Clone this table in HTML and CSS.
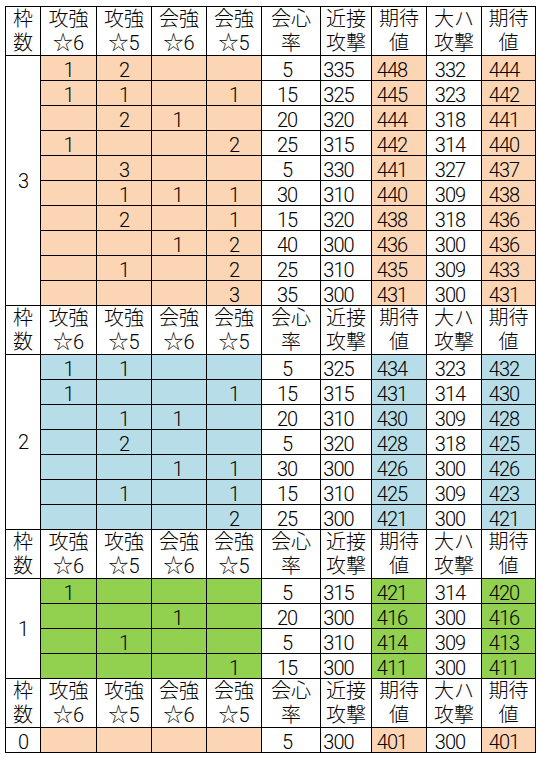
FILE: index.html
```html
<!DOCTYPE html>
<html lang="ja">
<head>
<meta charset="utf-8">
<title>枠数別 期待値表</title>
<link rel="stylesheet" href="styles.css">
</head>
<body>
<table class="sheet">
<colgroup>
<col class="w-waku"><col class="w-a"><col class="w-b"><col class="w-c"><col class="w-d"><col class="w-e"><col class="w-f"><col class="w-g"><col class="w-h"><col class="w-i">
</colgroup>
<tbody class="peach">
<tr class="hdr"><th>枠<br>数</th><th>攻強<br>☆6</th><th>攻強<br>☆5</th><th>会強<br>☆6</th><th>会強<br>☆5</th><th>会心<br>率</th><th>近接<br>攻撃</th><th>期待<br>値</th><th>大ハ<br>攻撃</th><th>期待<br>値</th></tr>
<tr><td class="waku" rowspan="10">3</td><td class="f">1</td><td class="f">2</td><td class="f"></td><td class="f"></td><td>5</td><td>335</td><td class="f">448</td><td>332</td><td class="f">444</td></tr>
<tr><td class="f">1</td><td class="f">1</td><td class="f"></td><td class="f">1</td><td>15</td><td>325</td><td class="f">445</td><td>323</td><td class="f">442</td></tr>
<tr><td class="f"></td><td class="f">2</td><td class="f">1</td><td class="f"></td><td>20</td><td>320</td><td class="f">444</td><td>318</td><td class="f">441</td></tr>
<tr><td class="f">1</td><td class="f"></td><td class="f"></td><td class="f">2</td><td>25</td><td>315</td><td class="f">442</td><td>314</td><td class="f">440</td></tr>
<tr><td class="f"></td><td class="f">3</td><td class="f"></td><td class="f"></td><td>5</td><td>330</td><td class="f">441</td><td>327</td><td class="f">437</td></tr>
<tr><td class="f"></td><td class="f">1</td><td class="f">1</td><td class="f">1</td><td>30</td><td>310</td><td class="f">440</td><td>309</td><td class="f">438</td></tr>
<tr><td class="f"></td><td class="f">2</td><td class="f"></td><td class="f">1</td><td>15</td><td>320</td><td class="f">438</td><td>318</td><td class="f">436</td></tr>
<tr><td class="f"></td><td class="f"></td><td class="f">1</td><td class="f">2</td><td>40</td><td>300</td><td class="f">436</td><td>300</td><td class="f">436</td></tr>
<tr><td class="f"></td><td class="f">1</td><td class="f"></td><td class="f">2</td><td>25</td><td>310</td><td class="f">435</td><td>309</td><td class="f">433</td></tr>
<tr><td class="f"></td><td class="f"></td><td class="f"></td><td class="f">3</td><td>35</td><td>300</td><td class="f">431</td><td>300</td><td class="f">431</td></tr>
</tbody>
<tbody class="blue">
<tr class="hdr"><th>枠<br>数</th><th>攻強<br>☆6</th><th>攻強<br>☆5</th><th>会強<br>☆6</th><th>会強<br>☆5</th><th>会心<br>率</th><th>近接<br>攻撃</th><th>期待<br>値</th><th>大ハ<br>攻撃</th><th>期待<br>値</th></tr>
<tr><td class="waku" rowspan="7">2</td><td class="f">1</td><td class="f">1</td><td class="f"></td><td class="f"></td><td>5</td><td>325</td><td class="f">434</td><td>323</td><td class="f">432</td></tr>
<tr><td class="f">1</td><td class="f"></td><td class="f"></td><td class="f">1</td><td>15</td><td>315</td><td class="f">431</td><td>314</td><td class="f">430</td></tr>
<tr><td class="f"></td><td class="f">1</td><td class="f">1</td><td class="f"></td><td>20</td><td>310</td><td class="f">430</td><td>309</td><td class="f">428</td></tr>
<tr><td class="f"></td><td class="f">2</td><td class="f"></td><td class="f"></td><td>5</td><td>320</td><td class="f">428</td><td>318</td><td class="f">425</td></tr>
<tr><td class="f"></td><td class="f"></td><td class="f">1</td><td class="f">1</td><td>30</td><td>300</td><td class="f">426</td><td>300</td><td class="f">426</td></tr>
<tr><td class="f"></td><td class="f">1</td><td class="f"></td><td class="f">1</td><td>15</td><td>310</td><td class="f">425</td><td>309</td><td class="f">423</td></tr>
<tr><td class="f"></td><td class="f"></td><td class="f"></td><td class="f">2</td><td>25</td><td>300</td><td class="f">421</td><td>300</td><td class="f">421</td></tr>
</tbody>
<tbody class="green">
<tr class="hdr"><th>枠<br>数</th><th>攻強<br>☆6</th><th>攻強<br>☆5</th><th>会強<br>☆6</th><th>会強<br>☆5</th><th>会心<br>率</th><th>近接<br>攻撃</th><th>期待<br>値</th><th>大ハ<br>攻撃</th><th>期待<br>値</th></tr>
<tr><td class="waku" rowspan="4">1</td><td class="f">1</td><td class="f"></td><td class="f"></td><td class="f"></td><td>5</td><td>315</td><td class="f">421</td><td>314</td><td class="f">420</td></tr>
<tr><td class="f"></td><td class="f"></td><td class="f">1</td><td class="f"></td><td>20</td><td>300</td><td class="f">416</td><td>300</td><td class="f">416</td></tr>
<tr><td class="f"></td><td class="f">1</td><td class="f"></td><td class="f"></td><td>5</td><td>310</td><td class="f">414</td><td>309</td><td class="f">413</td></tr>
<tr><td class="f"></td><td class="f"></td><td class="f"></td><td class="f">1</td><td>15</td><td>300</td><td class="f">411</td><td>300</td><td class="f">411</td></tr>
</tbody>
<tbody class="peach">
<tr class="hdr"><th>枠<br>数</th><th>攻強<br>☆6</th><th>攻強<br>☆5</th><th>会強<br>☆6</th><th>会強<br>☆5</th><th>会心<br>率</th><th>近接<br>攻撃</th><th>期待<br>値</th><th>大ハ<br>攻撃</th><th>期待<br>値</th></tr>
<tr><td class="waku zero">0</td><td class="f"></td><td class="f"></td><td class="f"></td><td class="f"></td><td>5</td><td>300</td><td class="f">401</td><td>300</td><td class="f">401</td></tr>
</tbody>
</table>
</body>
</html>
```
FILE: styles.css
```css
html, body {
  margin: 0;
  padding: 0;
  background: #ffffff;
}

body {
  font-family: Roboto, "Liberation Sans", "Noto Sans CJK JP", sans-serif;
  color: #000000;
}

.sheet {
  border-collapse: collapse;
  table-layout: fixed;
  width: 531px;
  margin: 6px 0 0 5px;
}

.w-waku { width: 35px; }
.w-a { width: 56px; }
.w-b { width: 55px; }
.w-c { width: 55px; }
.w-d { width: 55px; }
.w-e { width: 59px; }
.w-f { width: 51px; }
.w-g { width: 55px; }
.w-h { width: 55px; }
.w-i { width: 54px; }

.sheet th,
.sheet td {
  border: 1px solid #000000;
  padding: 0;
  font-family: Roboto, "Noto Sans CJK JP", sans-serif;
  font-weight: 300;
  text-align: center;
  white-space: nowrap;
}

.hdr th {
  height: 48px;
  font-size: 20px;
  line-height: 24px;
  vertical-align: middle;
}

.sheet td {
  height: 24px;
  font-size: 20px;
  line-height: 20px;
  letter-spacing: -1px;
  vertical-align: bottom;
}

.sheet td.waku {
  vertical-align: middle;
  background: #ffffff;
}

.sheet td.zero {
  vertical-align: bottom;
}

.peach .f { background: #fcd5b4; }
.blue .f { background: #b7dee8; }
.green .f { background: #92d050; }

.sheet td:nth-last-child(5) { padding-right: 8px; }
.sheet td:nth-last-child(4) { padding-right: 15px; }
.sheet td:nth-last-child(3) { padding-right: 14px; }
.sheet td:nth-last-child(2) { padding-right: 8px; }
.sheet td:nth-last-child(1) { padding-right: 9px; }
.sheet td.f:nth-last-child(7) { padding-right: 3px; }
```
